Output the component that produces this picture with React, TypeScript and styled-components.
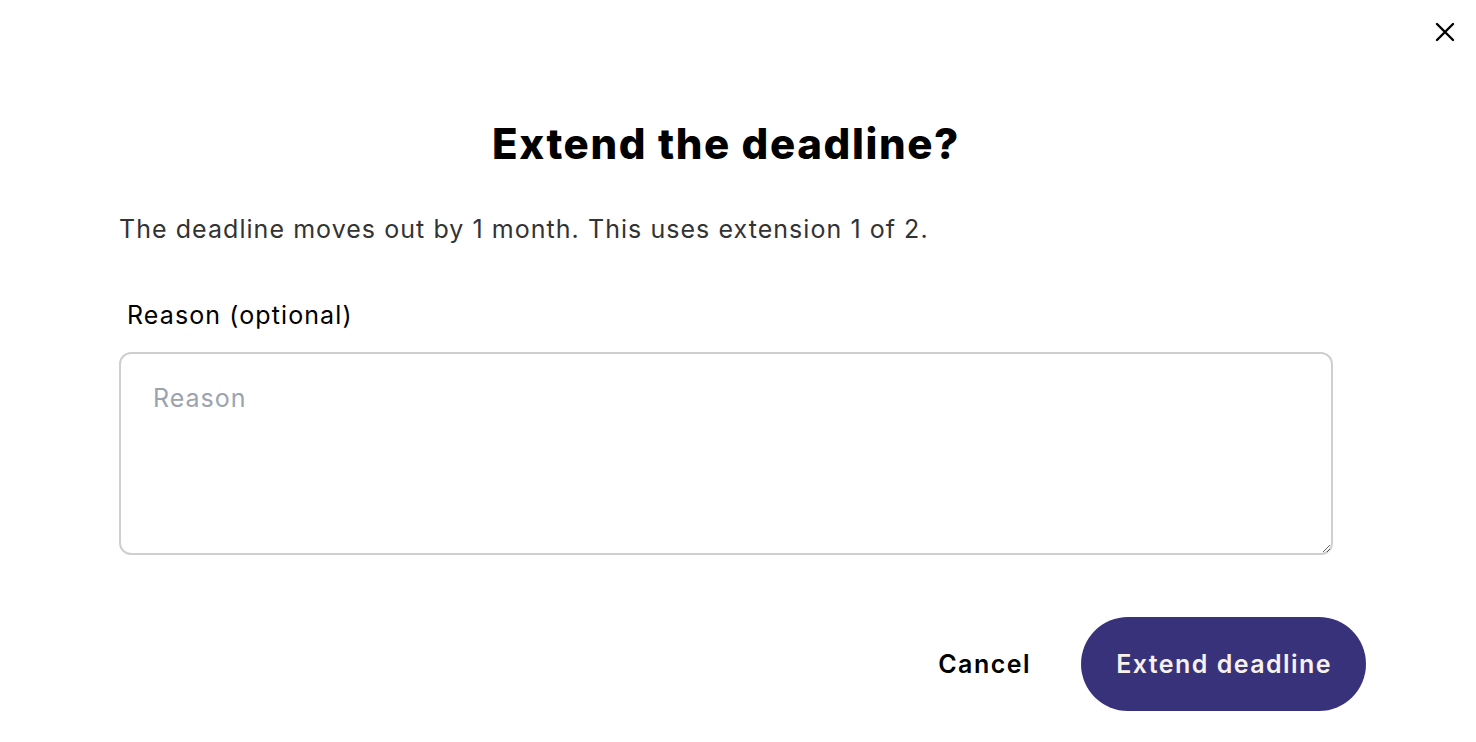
import React from "react";
import styled, { createGlobalStyle } from "styled-components";

const Global = createGlobalStyle`
  html, body { margin: 0; padding: 0; background: #ffffff; }
  body { font-family: Inter, "Noto Sans", Arial, sans-serif; -webkit-font-smoothing: antialiased; }
  * { box-sizing: border-box; }
`;

const Page = styled.div`
  position: relative;
  width: 1476px;
  height: 742px;
  background: #fff;
  overflow: hidden;
`;

const CloseButton = styled.button`
  position: absolute;
  top: 20px;
  right: 19px;
  width: 24px;
  height: 24px;
  padding: 0;
  border: none;
  background: transparent;
  display: flex;
  align-items: center;
  justify-content: center;
  cursor: pointer;
`;

const Content = styled.div`
  display: flex;
  flex-direction: column;
  padding: 110px 110px 0 119px;
`;

const Title = styled.h1`
  margin: 0;
  font-size: 42px;
  font-weight: 800;
  letter-spacing: 1.6px;
  line-height: 68px;
  color: #000;
  text-align: center;
  width: 1214px;
`;

const Description = styled.p`
  margin: 35px 0 0;
  font-size: 25px;
  letter-spacing: 1.05px;
  line-height: 32px;
  color: #333;
`;

const Label = styled.label`
  margin: 54px 0 0 8px;
  font-size: 25px;
  letter-spacing: 1.1px;
  line-height: 32px;
  color: #000;
`;

const TextArea = styled.textarea`
  margin-top: 21px;
  width: 1214px;
  height: 203px;
  border: 2px solid #cfcfcf;
  border-radius: 12px;
  padding: 28px 32px;
  font-family: Inter, "Noto Sans", Arial, sans-serif;
  font-size: 25px;
  letter-spacing: 1px;
  line-height: 32px;
  color: #222;
  resize: vertical;
  outline: none;
  &::placeholder { color: #9ca3af; }
`;

const Footer = styled.div`
  display: flex;
  justify-content: flex-end;
  align-items: center;
  gap: 50px;
  margin-top: 62px;
`;

const CancelButton = styled.button`
  border: none;
  background: transparent;
  font-family: Inter, "Noto Sans", Arial, sans-serif;
  font-size: 25px;
  font-weight: 600;
  letter-spacing: 1.5px;
  color: #000;
  padding: 0;
  cursor: pointer;
`;

const PrimaryButton = styled.button`
  height: 94px;
  padding: 0 34px 0 35px;
  border: none;
  border-radius: 47px;
  background: #38327a;
  color: #f7f1ea;
  font-family: Inter, "Noto Sans", Arial, sans-serif;
  font-size: 25px;
  font-weight: 600;
  letter-spacing: 1.45px;
  cursor: pointer;
`;

export default function App() {
  return (
    <Page>
      <Global />
      <CloseButton aria-label="Close">
        <svg width="22" height="22" viewBox="0 0 22 22" fill="none" stroke="#000" strokeWidth="2.4" strokeLinecap="round">
          <path d="M3 3 L19 19 M19 3 L3 19" />
        </svg>
      </CloseButton>
      <Content>
        <Title>Extend the deadline?</Title>
        <Description>The deadline moves out by 1 month. This uses extension 1 of 2.</Description>
        <Label htmlFor="reason">Reason (optional)</Label>
        <TextArea id="reason" placeholder="Reason" />
        <Footer>
          <CancelButton>Cancel</CancelButton>
          <PrimaryButton>Extend deadline</PrimaryButton>
        </Footer>
      </Content>
    </Page>
  );
}
